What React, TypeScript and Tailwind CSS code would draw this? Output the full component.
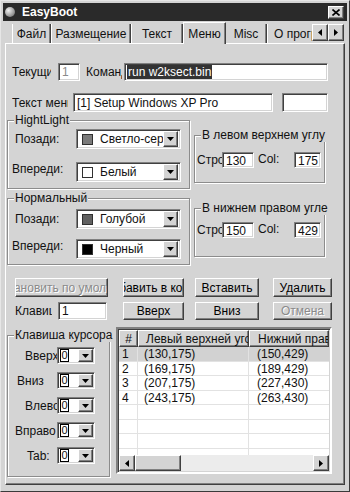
import React from "react";

const SUNKEN =
  "bg-white border border-t-[#808080] border-l-[#808080] border-b-white border-r-white shadow-[inset_1px_1px_0_#404040,inset_-1px_-1px_0_#d4d4d4] flex items-center overflow-hidden whitespace-nowrap shrink-0";
const RAISED =
  "bg-[#d4d4d4] border border-t-white border-l-white border-r-[#404040] border-b-[#404040] shadow-[inset_-1px_-1px_0_#808080] flex items-center justify-center overflow-hidden whitespace-nowrap shrink-0";
const LABEL = "overflow-hidden whitespace-nowrap shrink-0";

const ROWS = [
  { n: "1", a: "(130,175)", b: "(150,429)" },
  { n: "2", a: "(169,175)", b: "(189,429)" },
  { n: "3", a: "(207,175)", b: "(227,430)" },
  { n: "4", a: "(243,175)", b: "(263,430)" },
  { n: "", a: "", b: "" },
  { n: "", a: "", b: "" },
  { n: "", a: "", b: "" },
  { n: "", a: "", b: "" },
];

const KEYS = [
  { label: "Вверх", pl: "pl-[17px]" },
  { label: "Вниз", pl: "pl-[9px]" },
  { label: "Влево", pl: "pl-[17px]" },
  { label: "Вправо", pl: "pl-[7px]" },
  { label: "Tab:", pl: "pl-[19px]" },
];

function Arrow({ dir }: { dir: "down" | "left" | "right" }) {
  if (dir === "down")
    return (
      <svg width="7" height="4" viewBox="0 0 7 4">
        <path d="M0 0h7L3.5 4z" fill="#000" />
      </svg>
    );
  return (
    <svg width="4" height="7" viewBox="0 0 4 7">
      <path d={dir === "left" ? "M4 0v7L0 3.5z" : "M0 0v7l4-3.5z"} fill="#000" />
    </svg>
  );
}

function Group({
  title,
  className,
  children,
}: {
  title: string;
  className: string;
  children: React.ReactNode;
}) {
  return (
    <div
      className={`relative border border-[#8c8c8c] shadow-[inset_1px_1px_0_#fff,1px_1px_0_#fff] ${className}`}
    >
      <span className="absolute left-[6px] -top-[8px] px-[1px] bg-[#d4d4d4] whitespace-nowrap">
        {title}
      </span>
      {children}
    </div>
  );
}

function ColorCombo({ swatch, text }: { swatch: string; text: string }) {
  return (
    <div className={`${SUNKEN} w-[105px] h-[20px] pl-[5px] pr-[2px]`}>
      <span className={`w-[11px] h-[11px] border border-[#303030] shrink-0 ${swatch}`} />
      <span className="ml-[7px] flex-1 overflow-hidden">{text}</span>
      <div className={`${RAISED} w-[15px] h-[16px]`}>
        <Arrow dir="down" />
      </div>
    </div>
  );
}

function Btn({
  className,
  children,
  disabled,
}: {
  className: string;
  children: React.ReactNode;
  disabled?: boolean;
}) {
  return (
    <div
      className={`${RAISED} ${
        disabled ? "text-[#8a8a8a] [text-shadow:1px_1px_0_#fff]" : "text-black"
      } ${className}`}
    >
      {children}
    </div>
  );
}

export default function App() {
  return (
    <div className="w-[350px] h-[492px] bg-[#d4d4d4] border border-t-[#e6e6e6] border-l-[#e6e6e6] border-r-[#3a3a3a] border-b-[#3a3a3a] p-[2px] font-['Liberation_Sans',Arial,sans-serif] text-[12px] leading-[14px] text-[#111] overflow-hidden">
      {/* title bar */}
      <div className="h-[18px] bg-[#2a2a2a] flex items-center pl-[2px] pr-[3px]">
        <div className="w-[10px] h-[10px] rounded-full bg-[radial-gradient(circle_at_35%_35%,#f0f0f0,#9a9a9a_60%,#555)]" />
        <span className="ml-[7px] text-white font-bold">EasyBoot</span>
        <div className={`${RAISED} ml-auto w-[16px] h-[13px]`}>
          <svg width="8" height="7" viewBox="0 0 8 7">
            <path d="M0.5 0.5l7 6M7.5 0.5l-7 6" stroke="#000" strokeWidth="1.6" />
          </svg>
        </div>
      </div>

      {/* tabs */}
      <div className="h-[22px] flex items-end pl-[9px]">
        {[
          { t: "Файл", w: "w-[39px]" },
          { t: "Размещение", w: "w-[80px]" },
          { t: "Текст", w: "w-[52px]" },
        ].map((tab) => (
          <div
            key={tab.t}
            className={`${tab.w} h-[19px] flex items-center justify-center border-l border-l-white border-r border-r-[#404040] shadow-[inset_-1px_0_0_#808080] whitespace-nowrap`}
          >
            {tab.t}
          </div>
        ))}
        <div className="relative z-10 top-[1px] w-[43px] h-[22px] flex items-center justify-center bg-[#d4d4d4] border-t border-t-white border-l border-l-white border-r border-r-[#404040] shadow-[inset_-1px_0_0_#808080]">
          Меню
        </div>
        <div className="w-[41px] h-[19px] flex items-center justify-center border-r border-r-[#404040] shadow-[inset_-1px_0_0_#808080]">
          Misc
        </div>
        <div className="w-[45px] h-[19px] flex items-center pl-[6px] border-l border-l-white overflow-hidden whitespace-nowrap">
          О программе
        </div>
        <div className="flex mb-[2px]">
          <div className={`${RAISED} w-[16px] h-[17px]`}>
            <Arrow dir="left" />
          </div>
          <div className={`${RAISED} w-[16px] h-[17px]`}>
            <Arrow dir="right" />
          </div>
        </div>
      </div>

      {/* tab panel */}
      <div className="ml-[2px] w-[340px] h-[442px] border border-t-white border-l-white border-r-[#404040] border-b-[#404040] shadow-[inset_-1px_-1px_0_#808080] overflow-hidden">
        {/* current / command */}
        <div className="flex items-center mt-[19px] h-[18px]">
          <span className={`${LABEL} ml-[6px] w-[39px]`}>Текущий</span>
          <div className={`${SUNKEN} ml-[7px] w-[22px] h-[18px] pl-[3px] text-[#8a8a8a]`}>1</div>
          <span className={`${LABEL} ml-[6px] w-[36px]`}>Команда</span>
          <div className={`${SUNKEN} ml-[2px] w-[204px] h-[18px] pl-[2px]`}>
            <span className="bg-[#333] text-white px-[1px]">run w2ksect.bin</span>
          </div>
        </div>

        {/* menu text */}
        <div className="flex items-center mt-[12px] h-[19px]">
          <span className={`${LABEL} ml-[6px] w-[56px]`}>Текст меню</span>
          <div className={`${SUNKEN} ml-[5px] w-[200px] h-[19px] pl-[3px]`}>
            [1] Setup Windows XP Pro
          </div>
          <div className={`${SUNKEN} ml-[9px] w-[46px] h-[19px]`} />
        </div>

        {/* colour groups + position groups */}
        <div className="flex items-start">
          <div className="ml-[1px] w-[183px] flex flex-col">
            <Group title="HightLight" className="mt-[8px] h-[69px]">
              <div className="flex items-center mt-[8px] h-[20px]">
                <span className={`${LABEL} w-[68px] pl-[7px]`}>Позади:</span>
                <ColorCombo swatch="bg-[#7a7a7a]" text="Светло-серый" />
              </div>
              <div className="flex items-center mt-[13px] h-[20px]">
                <span className={`${LABEL} w-[68px] pl-[4px] -mt-[6px]`}>Впереди:</span>
                <ColorCombo swatch="bg-white" text="Белый" />
              </div>
            </Group>
            <Group title="Нормальный" className="mt-[9px] h-[67px]">
              <div className="flex items-center mt-[10px] h-[20px]">
                <span className={`${LABEL} w-[68px] pl-[7px]`}>Позади:</span>
                <ColorCombo swatch="bg-[#606060]" text="Голубой" />
              </div>
              <div className="flex items-center mt-[10px] h-[20px]">
                <span className={`${LABEL} w-[68px] pl-[4px] -mt-[6px]`}>Впереди:</span>
                <ColorCombo swatch="bg-black" text="Черный" />
              </div>
            </Group>
          </div>

          <div className="ml-[4px] w-[131px] flex flex-col">
            <Group title="В левом верхнем углу" className="mt-[23px] h-[48px]">
              <div className="flex items-center mt-[16px] h-[16px]">
                <span className={`${LABEL} w-[27px] pl-[2px]`}>Строка</span>
                <div className={`${SUNKEN} w-[32px] h-[16px] pl-[3px] pt-[2px]`}>130</div>
                <span className={`${LABEL} ml-[4px] w-[36px] -mt-[3px]`}>Col:</span>
                <div className={`${SUNKEN} w-[27px] h-[16px] pl-[3px] pt-[2px]`}>175</div>
              </div>
            </Group>
            <Group title="В нижнем правом угле" className="mt-[25px] h-[49px]">
              <div className="flex items-center mt-[13px] h-[16px]">
                <span className={`${LABEL} w-[27px] pl-[2px]`}>Строка</span>
                <div className={`${SUNKEN} w-[32px] h-[16px] pl-[3px] pt-[2px]`}>150</div>
                <span className={`${LABEL} ml-[4px] w-[36px] -mt-[3px]`}>Col:</span>
                <div className={`${SUNKEN} w-[27px] h-[16px] pl-[3px] pt-[2px]`}>429</div>
              </div>
            </Group>
          </div>
        </div>

        {/* buttons */}
        <div className="flex items-center mt-[13px] h-[19px]">
          <Btn disabled className="ml-[9px] w-[93px] h-[19px]">
            Восстановить по умолчанию
          </Btn>
          <Btn className="ml-[15px] w-[61px] h-[19px]">Добавить в конец</Btn>
          <Btn className="ml-[11px] w-[64px] h-[19px]">Вставить</Btn>
          <Btn className="ml-[14px] w-[59px] h-[19px]">Удалить</Btn>
        </div>
        <div className="flex items-center mt-[5px] h-[18px]">
          <span className={`${LABEL} ml-[9px] w-[37px]`}>Клавиша</span>
          <div className={`${SUNKEN} ml-[6px] w-[49px] h-[18px] pl-[3px]`}>1</div>
          <Btn className="ml-[16px] w-[61px] h-[18px]">Вверх</Btn>
          <Btn className="ml-[11px] w-[64px] h-[18px]">Вниз</Btn>
          <Btn disabled className="ml-[14px] w-[59px] h-[18px]">
            Отмена
          </Btn>
        </div>

        {/* cursor keys + list */}
        <div className="flex items-start">
          <Group title="Клавиша курсора" className="ml-[1px] mt-[15px] w-[103px] h-[142px] pt-[11px] flex flex-col gap-[8px]">
            {KEYS.map((k) => (
              <div key={k.label} className="flex items-center h-[17px]">
                <span className={`${LABEL} w-[49px] ${k.pl}`}>{k.label}</span>
                <div className={`${SUNKEN} w-[38px] h-[17px] pl-[2px] pr-[1px]`}>
                  <span className="w-[9px] h-[13px] border border-black flex items-center justify-center text-[11px] leading-[11px]">
                    0
                  </span>
                  <div className={`${RAISED} ml-auto w-[15px] h-[13px]`}>
                    <Arrow dir="down" />
                  </div>
                </div>
              </div>
            ))}
          </Group>

          <div className="ml-[6px] mt-[7px] w-[216px] h-[147px] flex flex-col bg-white border-2 border-t-[#808080] border-l-[#808080] border-b-white border-r-white shadow-[inset_1px_1px_0_#404040,inset_-1px_-1px_0_#d4d4d4] p-[1px]">
            <div className="flex h-[17px] shrink-0">
              <div className={`${RAISED} w-[19px] h-[17px]`}>#</div>
              <div className={`${RAISED} w-[111px] h-[17px] justify-start pl-[7px]`}>
                Левый верхней угол
              </div>
              <div className={`${RAISED} flex-1 h-[17px] justify-start pl-[8px]`}>
                Нижний правый
              </div>
            </div>
            <div className="flex-1 overflow-hidden">
              {ROWS.map((r, i) => (
                <div
                  key={i}
                  className={`flex h-[14.5px] border-b border-[#e2e2e2] ${i === 0 ? "bg-[#d2d2d2]" : ""}`}
                >
                  <span className="w-[19px] pl-[3px] border-r border-[#e2e2e2] shrink-0">{r.n}</span>
                  <span className="w-[111px] pl-[6px] border-r border-[#e2e2e2] shrink-0">{r.a}</span>
                  <span className="flex-1 pl-[8px]">{r.b}</span>
                </div>
              ))}
            </div>
            <div className="flex h-[16px] shrink-0 bg-[#ececec]">
              <div className={`${RAISED} w-[16px] h-[16px]`}>
                <Arrow dir="left" />
              </div>
              <div className={`${RAISED} w-[46px] h-[16px]`} />
              <div className="flex-1" />
              <div className={`${RAISED} w-[16px] h-[16px]`}>
                <Arrow dir="right" />
              </div>
            </div>
          </div>
        </div>
      </div>
    </div>
  );
}
